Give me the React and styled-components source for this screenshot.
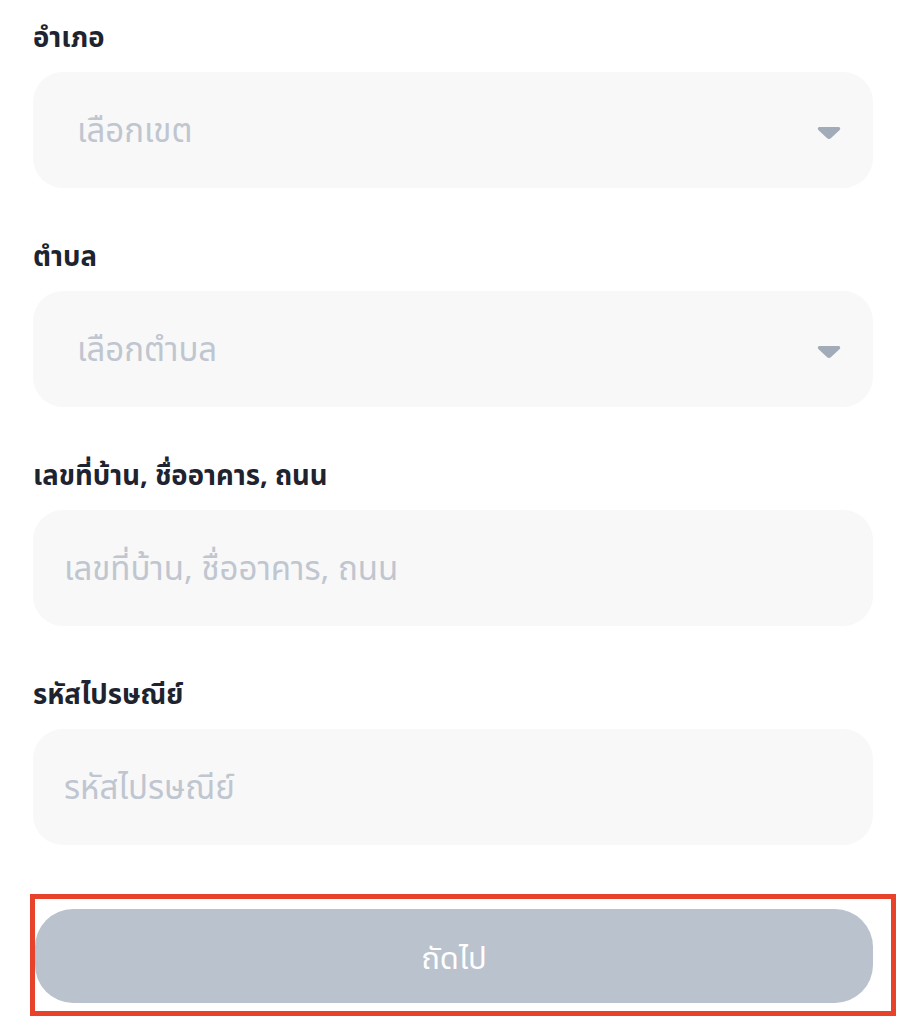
import React from "react";
import styled, { createGlobalStyle } from "styled-components";

const GlobalStyle = createGlobalStyle`
  body {
    margin: 0;
    background: #ffffff;
    font-family: "Noto Sans Thai", "Noto Sans", "Liberation Sans", sans-serif;
  }
`;

const Page = styled.div`
  width: 840px;
  padding: 21px 0 0 33px;
  display: flex;
  flex-direction: column;
`;

const Field = styled.div`
  display: flex;
  flex-direction: column;
  margin-bottom: 52px;
`;

const Label = styled.div`
  font-size: 27.5px;
  font-weight: 700;
  line-height: 36px;
  color: #1e2330;
  margin-bottom: 15px;
`;

const Box = styled.div`
  height: 116px;
  box-sizing: border-box;
  border-radius: 30px;
  background: #f8f8f8;
  display: flex;
  align-items: center;
  justify-content: space-between;
  padding: 4px 32px 0 ${(p) => (p.$select ? "44px" : "31px")};
`;

const Placeholder = styled.span`
  font-size: 33px;
  color: #bfc6d0;
`;

const Caret = styled.svg`
  width: 24px;
  height: 14px;
  display: block;
  margin-top: 2px;
`;

const ButtonFrame = styled.div`
  margin: -3px 0 0 -3px;
  width: 866px;
  box-sizing: border-box;
  border: 5px solid #e8432a;
  padding: 10px 18px 8px 0;
`;

const NextButton = styled.button`
  width: 838px;
  height: 94px;
  border: none;
  border-radius: 38px;
  background: #bac2cd;
  color: #ffffff;
  font-family: inherit;
  font-size: 31px;
  padding: 6px 0 0;
  display: flex;
  align-items: center;
  justify-content: center;
`;

const fields = [
  { label: "อำเภอ", placeholder: "เลือกเขต", select: true },
  { label: "ตำบล", placeholder: "เลือกตำบล", select: true },
  { label: "เลขที่บ้าน, ชื่ออาคาร, ถนน", placeholder: "เลขที่บ้าน, ชื่ออาคาร, ถนน" },
  { label: "รหัสไปรษณีย์", placeholder: "รหัสไปรษณีย์" },
];

function App() {
  return (
    <>
      <GlobalStyle />
      <Page>
        {fields.map((f) => (
          <Field key={f.label}>
            <Label>{f.label}</Label>
            <Box $select={f.select}>
              <Placeholder>{f.placeholder}</Placeholder>
              {f.select && (
                <Caret viewBox="0 0 24 14">
                  <path
                    d="M2.5 1h19c1.6 0 2.3 1.8 1.2 2.9l-8.9 8.4c-1 .9-2.6.9-3.6 0L1.3 3.9C.2 2.8.9 1 2.5 1z"
                    fill="#a2abb8"
                  />
                </Caret>
              )}
            </Box>
          </Field>
        ))}
        <ButtonFrame>
          <NextButton>ถัดไป</NextButton>
        </ButtonFrame>
      </Page>
    </>
  );
}

export default App;
